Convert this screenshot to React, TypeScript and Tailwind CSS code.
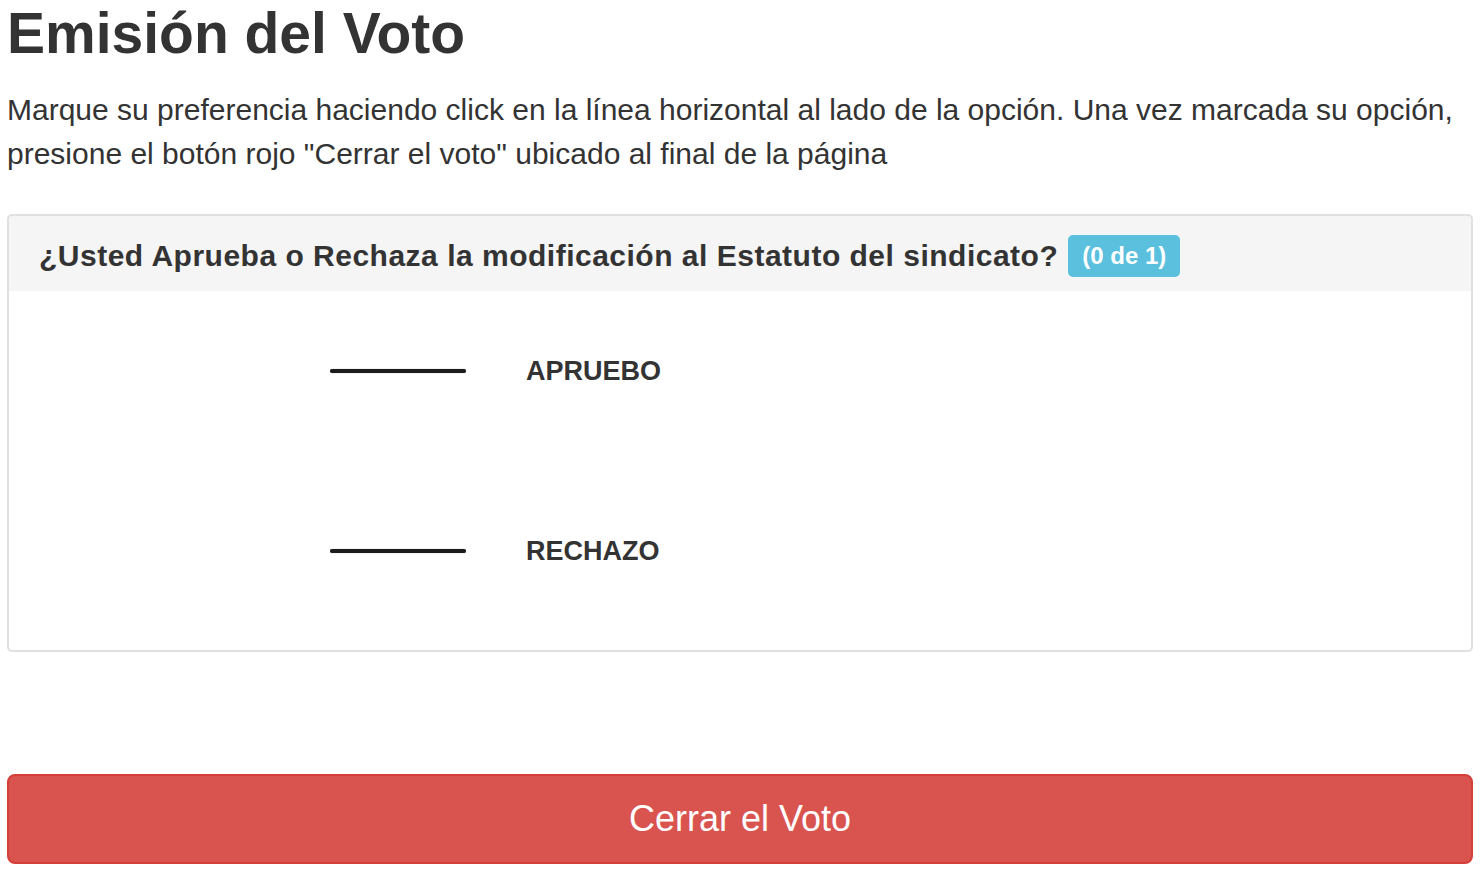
import React from "react";

const options = [{ label: "APRUEBO" }, { label: "RECHAZO" }];

export default function App() {
  return (
    <div className="min-h-screen bg-white pl-[7px] pr-[11px] text-[#333] [font-family:'Liberation_Sans',Arial,sans-serif]">
      <h1 className="pt-[2px] text-[57px] font-bold leading-[62px]">Emisión del Voto</h1>
      <p className="mt-[24px] text-[30px] font-normal leading-[44px] text-[#333]">
        Marque su preferencia haciendo click en la línea horizontal al lado de la opción. Una vez marcada su opción,
        presione el botón rojo "Cerrar el voto" ubicado al final de la página
      </p>

      <div className="mt-[38px] overflow-hidden rounded-[5px] border-2 border-[#e0e0e0] bg-white">
        <div className="flex h-[75px] items-center bg-[#f5f5f5] pl-[30px] pt-[4px]">
          <span className="text-[30px] font-bold tracking-[0.5px]">
            ¿Usted Aprueba o Rechaza la modificación al Estatuto del sindicato?
          </span>
          <span className="ml-[10px] rounded-[5px] bg-[#5bc0de] px-[14px] py-[5px] text-[24px] font-bold leading-[32px] text-white">
            (0 de 1)
          </span>
        </div>
        <div className="flex flex-col gap-[90px] pb-[54px] pt-[35px]">
          {options.map((o) => (
            <div key={o.label} className="flex h-[90px] items-center pl-[321px]">
              <div className="h-[4px] w-[136px] rounded-full bg-[#1c1c1c] shadow-[0_0_1px_#777]" />
              <span className="ml-[60px] text-[27px] font-bold">{o.label}</span>
            </div>
          ))}
        </div>
      </div>

      <button className="mt-[122px] h-[90px] w-full rounded-[8px] border-2 border-[#d43f3a] bg-[#d9534f] text-[36px] text-white">
        Cerrar el Voto
      </button>
    </div>
  );
}
